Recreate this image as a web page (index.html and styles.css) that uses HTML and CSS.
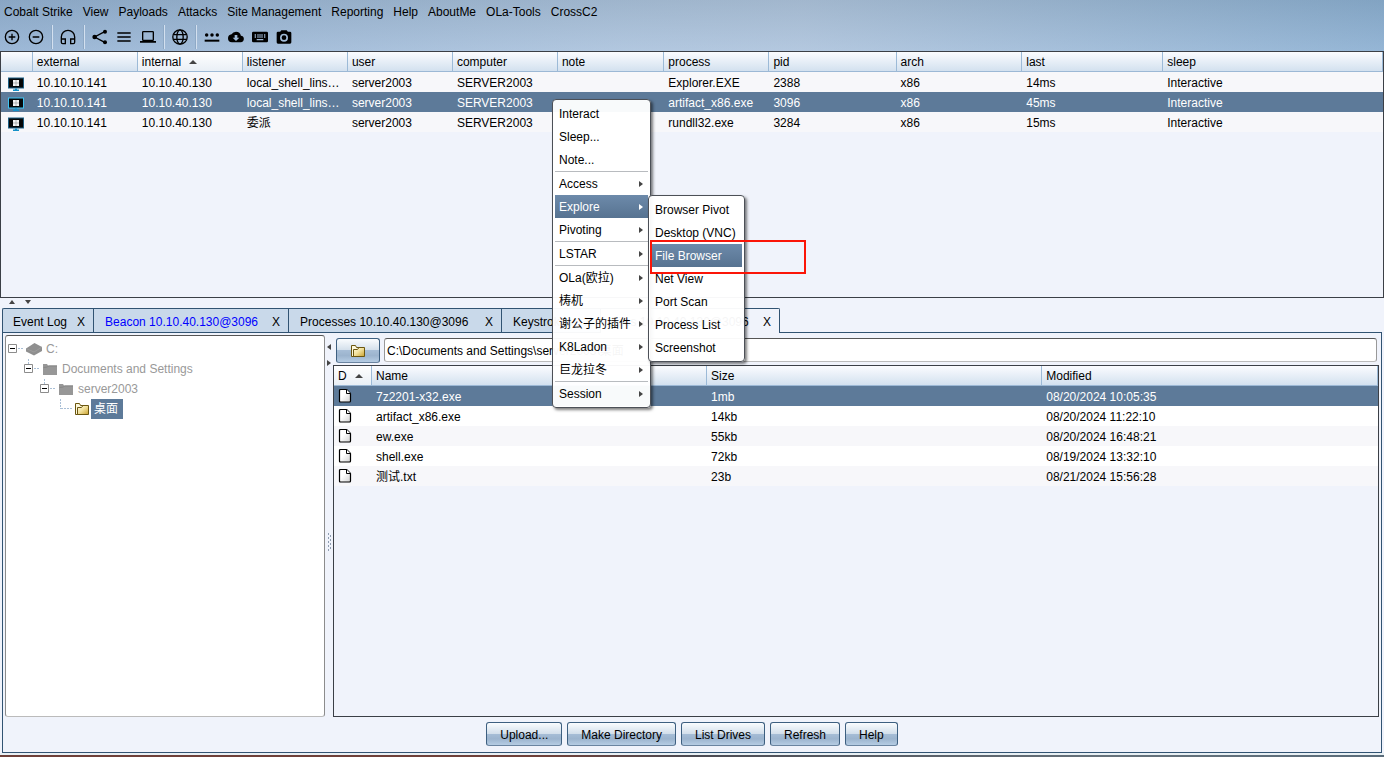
FILE: index.html
```html
<!DOCTYPE html>
<html lang="en">
<head>
<meta charset="utf-8">
<title>Cobalt Strike</title>
<link rel="stylesheet" href="styles.css">
</head>
<body>
<svg class="defs" aria-hidden="true">
  <defs>
    <linearGradient id="gold" x1="0" y1="0" x2="1" y2="1"><stop offset="0" stop-color="#fffbe0"/><stop offset=".45" stop-color="#f3e3a0"/><stop offset="1" stop-color="#c9a02c"/></linearGradient>
    <linearGradient id="paper" x1="0" y1="0" x2="1" y2="1"><stop offset=".4" stop-color="#fff"/><stop offset="1" stop-color="#d0d0d0"/></linearGradient>
    <symbol id="folder" viewBox="0 0 16 16"><path d="M1.500 2.500h4l1 2h7v9h-12z" fill="#fdf8dc" stroke="#6b560e"/><path d="M3.500 13.500V6.500h4l1.500-2h5.500v9z" fill="url(#gold)" stroke="#6b5610"/></symbol>
    <symbol id="folder-grey" viewBox="0 0 16 16"><path d="M1 3h4l1 1.500h9V14H1z" fill="#979797"/><path d="M1.500 6.500l4-.5 1-1H15" fill="none" stroke="#858585"/></symbol>
    <symbol id="drive" viewBox="0 0 16 16"><path d="M0 7.500 8.500 2 16 6v4L8 14.500 0 10.500z" fill="#8f8f8f"/><path d="M0 7.500 8 11l8-5" fill="none" stroke="#a2a2a2" stroke-width=".7"/></symbol>
    <symbol id="file" viewBox="0 0 14 16"><path d="M2.500 1.500h6l4 4v7.500q0 1-1 1h-9q-1 0-1-1v-10.500q0-1 1-1z" fill="url(#paper)" stroke="#000" stroke-width="1.200" stroke-linejoin="round"/><path d="M8.500 1.500v4h4" fill="#fff" stroke="#000"/></symbol>
    <symbol id="host" viewBox="0 0 18 14"><path d="M1 .5h16v11H1z" fill="currentColor"/><path d="M2 1.500h14v9H2z" fill="#050708"/><path d="M8 11.500h2v1h2v1.500H6v-1.500h2z" fill="#1490c8"/><path d="M6 3h6v6H6z" fill="#f4f4f4"/><path d="M9 3v6M6 6h6" stroke="#8a8a8a" stroke-width=".6"/></symbol>
  </defs>
</svg>
<div class="app">
  <header class="top">
    <nav class="menubar">
      <button>Cobalt Strike</button><button>View</button><button>Payloads</button><button>Attacks</button><button>Site Management</button><button>Reporting</button><button>Help</button><button>AboutMe</button><button>OLa-Tools</button><button>CrossC2</button>
    </nav>
    <div class="toolbar">
      <button aria-label="Connect"><svg viewBox="0 0 24 24"><path d="M13 7h-2v4H7v2h4v4h2v-4h4v-2h-4zM12 1a11 11 0 1 0 0 22 11 11 0 0 0 0-22zm0 20a9 9 0 1 1 0-18 9 9 0 0 1 0 18z"/></svg></button>
      <button aria-label="Disconnect"><svg viewBox="0 0 24 24"><path d="M7 11v2h10v-2zM12 1a11 11 0 1 0 0 22 11 11 0 0 0 0-22zm0 20a9 9 0 1 1 0-18 9 9 0 0 1 0 18z"/></svg></button>
      <span class="sep"></span>
      <button aria-label="Listeners"><svg viewBox="0 0 24 24"><path d="M12 1A11 11 0 0 0 1 12v8a3 3 0 0 0 3 3h5v-9H3v-2a9 9 0 0 1 18 0v2h-6v9h5a3 3 0 0 0 3-3v-8A11 11 0 0 0 12 1zM7 16v5H4a1 1 0 0 1-1-1v-4zm14 4a1 1 0 0 1-1 1h-3v-5h4z"/></svg></button>
      <span class="sep"></span>
      <button aria-label="Pivot graph"><svg viewBox="0 0 24 24"><path d="M19 4 4 12l15 8" fill="none" stroke="#000" stroke-width="2"/><circle cx="19.500" cy="4" r="3"/><circle cx="4" cy="12" r="3.500"/><circle cx="19.500" cy="20" r="3"/></svg></button>
      <button aria-label="Session table"><svg viewBox="0 0 24 24"><path d="M2 5h20v2H2zm0 6h20v2H2zm0 6h20v2H2z"/></svg></button>
      <button aria-label="Targets"><svg viewBox="0 0 24 24"><path fill-rule="evenodd" d="M5 3h14q2 0 2 2v11q0 2-2 2h5v2.500H0V18h5q-2 0-2-2V5q0-2 2-2zm0 2v11h14V5z"/></svg></button>
      <span class="sep"></span>
      <button aria-label="Web drive-by"><svg viewBox="0 0 24 24"><g fill="none" stroke="#000" stroke-width="2"><circle cx="12" cy="12" r="10.800"/><ellipse cx="12" cy="12" rx="4.800" ry="10.800"/><path d="M2.500 8.500h19M2.500 15.500h19"/></g></svg></button>
      <span class="sep"></span>
      <button aria-label="Credentials"><svg viewBox="0 0 24 24"><path d="M1 16h22v3H1z"/><circle cx="4" cy="9" r="2.600"/><circle cx="12" cy="9" r="2.600"/><circle cx="20" cy="9" r="2.600"/></svg></button>
      <button aria-label="Downloads"><svg viewBox="0 0 24 24"><path d="M19.350 10.040A7.490 7.490 0 0 0 12 4a7.480 7.480 0 0 0-6.650 4.040A6 6 0 0 0 0 14a6 6 0 0 0 6 6h13a5 5 0 0 0 .350-9.960zM17 13l-5 5-5-5h3V9h4v4z"/></svg></button>
      <button aria-label="Keystrokes"><svg viewBox="0 0 24 24"><path fill-rule="evenodd" d="M2 4h20q2 0 2 2v12q0 2-2 2H2q-2 0-2-2V6q0-2 2-2zm9 4v2h2V8zm0 3v2h2v-2zM8 8v2h2V8zm0 3v2h2v-2zM4 8v2h2V8zm0 3v2h2v-2zm3 4v2h10v-2zm7-7v2h2V8zm0 3v2h2v-2zm4-3v2h2V8zm0 3v2h2v-2z"/></svg></button>
      <button aria-label="Screenshots"><svg viewBox="0 0 24 24"><path fill-rule="evenodd" d="M8 2 6.200 4H3Q1 4 1 6v14q0 2 2 2h18q2 0 2-2V6q0-2-2-2h-3.200L16 2zm4 5a6 6 0 1 1 0 12 6 6 0 0 1 0-12z"/><circle cx="12" cy="13" r="3.500"/></svg></button>
    </div>
  </header>

  <section class="sessions">
    <table class="grid">
      <colgroup><col class="c-os"><col class="c-s"><col class="c-s"><col class="c-s"><col class="c-s"><col class="c-s"><col class="c-note"><col class="c-s"><col class="c-pid"><col class="c-arch"><col class="c-last"><col></colgroup>
      <thead><tr><th></th><th>external</th><th class="sorted">internal<i class="up"></i></th><th>listener</th><th>user</th><th>computer</th><th>note</th><th>process</th><th>pid</th><th>arch</th><th>last</th><th>sleep</th></tr></thead>
      <tbody>
        <tr class="odd"><td class="os"><svg><use href="#host"/></svg></td><td>10.10.10.141</td><td>10.10.40.130</td><td>local_shell_linshell</td><td>server2003</td><td>SERVER2003</td><td></td><td>Explorer.EXE</td><td>2388</td><td>x86</td><td>14ms</td><td>Interactive</td></tr>
        <tr class="sel"><td class="os"><svg><use href="#host"/></svg></td><td>10.10.10.141</td><td>10.10.40.130</td><td>local_shell_linshell</td><td>server2003</td><td>SERVER2003</td><td></td><td>artifact_x86.exe</td><td>3096</td><td>x86</td><td>45ms</td><td>Interactive</td></tr>
        <tr class="odd"><td class="os"><svg><use href="#host"/></svg></td><td>10.10.10.141</td><td>10.10.40.130</td><td>委派</td><td>server2003</td><td>SERVER2003</td><td></td><td>rundll32.exe</td><td>3284</td><td>x86</td><td>15ms</td><td>Interactive</td></tr>
      </tbody>
    </table>
  </section>

  <div class="hsplit"><i class="up"></i><i class="down"></i></div>

  <div class="tabs" role="tablist">
    <button role="tab">Event Log<span>X</span></button><button role="tab" class="fresh">Beacon 10.10.40.130@3096<span>X</span></button><button role="tab" class="wide">Processes 10.10.40.130@3096<span>X</span></button><button role="tab">Keystrokes<span>X</span></button><button role="tab" class="active" aria-selected="true">Files 10.10.40.130@3096<span>X</span></button>
  </div>

  <main class="panel">
    <div class="work">
      <div class="tree">
        <div class="node"><button aria-label="Collapse C:"><svg viewBox="0 0 20 20"><path d="M2.500 5.500h8v8h-8z" fill="#fff" stroke="#8c8c8c"/><path d="M4 9.500h5" stroke="#000"/><path d="M12 9.500h6" stroke="#a9bfd6" stroke-dasharray="2 1"/></svg></button><svg class="ic"><use href="#drive"/></svg><span>C:</span></div>
        <div class="node l1"><button aria-label="Collapse Documents and Settings"><svg viewBox="0 0 20 20"><path d="M6.500 0v5M12 9.500h6" stroke="#a9bfd6" stroke-dasharray="2 1"/><path d="M2.500 5.500h8v8h-8z" fill="#fff" stroke="#8c8c8c"/><path d="M4 9.500h5" stroke="#000"/></svg></button><svg class="ic"><use href="#folder-grey"/></svg><span>Documents and Settings</span></div>
        <div class="node l2"><button aria-label="Collapse server2003"><svg viewBox="0 0 20 20"><path d="M6.500 0v5M12 9.500h6" stroke="#a9bfd6" stroke-dasharray="2 1"/><path d="M2.500 5.500h8v8h-8z" fill="#fff" stroke="#8c8c8c"/><path d="M4 9.500h5" stroke="#000"/></svg></button><svg class="ic"><use href="#folder-grey"/></svg><span>server2003</span></div>
        <div class="node l3 current"><svg class="lead" viewBox="0 0 20 20"><path d="M6.500 0v10M7 9.500h11" fill="none" stroke="#a9bfd6" stroke-dasharray="2 1"/></svg><svg class="ic"><use href="#folder"/></svg><span>桌面</span></div>
      </div>
      <div class="vsplit"><i class="left"></i><i class="right"></i><svg class="grip" viewBox="0 0 6 20"><path d="M1.500 1v19" stroke="#8e9db1" stroke-dasharray="2 2"/><path d="M3.500 3v16" stroke="#8e9db1" stroke-dasharray="2 2"/></svg></div>
      <div class="browser">
        <div class="path"><button class="btn parent" aria-label="Parent folder"><svg><use href="#folder"/></svg></button><input type="text" aria-label="Path" value="C:\Documents and Settings\server2003\桌面"></div>
        <div class="files">
          <table class="grid">
            <colgroup><col class="c-d"><col class="c-name"><col class="c-name"><col></colgroup>
            <thead><tr><th class="sorted">D<i class="up"></i></th><th>Name</th><th>Size</th><th>Modified</th></tr></thead>
            <tbody>
              <tr class="sel"><td class="ft"><svg><use href="#file"/></svg></td><td>7z2201-x32.exe</td><td>1mb</td><td>08/20/2024 10:05:35</td></tr>
              <tr class="even"><td class="ft"><svg><use href="#file"/></svg></td><td>artifact_x86.exe</td><td>14kb</td><td>08/20/2024 11:22:10</td></tr>
              <tr class="odd"><td class="ft"><svg><use href="#file"/></svg></td><td>ew.exe</td><td>55kb</td><td>08/20/2024 16:48:21</td></tr>
              <tr class="even"><td class="ft"><svg><use href="#file"/></svg></td><td>shell.exe</td><td>72kb</td><td>08/19/2024 13:32:10</td></tr>
              <tr class="odd"><td class="ft"><svg><use href="#file"/></svg></td><td>测试.txt</td><td>23b</td><td>08/21/2024 15:56:28</td></tr>
            </tbody>
          </table>
        </div>
      </div>
    </div>
    <div class="actions"><button class="btn">Upload...</button><button class="btn">Make Directory</button><button class="btn">List Drives</button><button class="btn">Refresh</button><button class="btn">Help</button></div>
  </main>
  <div class="desktop"></div>
</div>

<div class="popup context" role="menu">
  <button role="menuitem">Interact</button><button role="menuitem">Sleep...</button><button role="menuitem">Note...</button>
  <hr>
  <button role="menuitem">Access<i class="right"></i></button><button role="menuitem" class="hot">Explore<i class="right"></i></button><button role="menuitem">Pivoting<i class="right"></i></button>
  <hr>
  <button role="menuitem">LSTAR<i class="right"></i></button>
  <hr>
  <button role="menuitem">OLa(欧拉)<i class="right"></i></button><button role="menuitem">梼杌<i class="right"></i></button><button role="menuitem">谢公子的插件<i class="right"></i></button><button role="menuitem">K8Ladon<i class="right"></i></button><button role="menuitem">巨龙拉冬<i class="right"></i></button>
  <hr>
  <button role="menuitem">Session<i class="right"></i></button>
</div>
<div class="popup explore" role="menu">
  <button role="menuitem">Browser Pivot</button><button role="menuitem">Desktop (VNC)</button><button role="menuitem" class="hot">File Browser</button><button role="menuitem">Net View</button><button role="menuitem">Port Scan</button><button role="menuitem">Process List</button><button role="menuitem">Screenshot</button>
</div>
<div class="highlight"></div>
</body>
</html>
```

FILE: styles.css
```css
* { box-sizing: border-box; }
body, button, input, table { font: 12px/20px "Liberation Sans", Arial, "Noto Sans CJK SC", sans-serif; color: #000; }
body { margin: 0; background: #f0f3fb; }
button { border: 0; margin: 0; padding: 0; background: none; white-space: nowrap; }
svg { display: block; }
.defs { position: absolute; width: 0; height: 0; }
.app { display: flex; flex-direction: column; height: 100vh; overflow: hidden; }

.top { background: linear-gradient(90deg, rgba(120,150,185,.25), rgba(205,210,220,.25) 45%, rgba(205,210,220,.3) 58%, rgba(90,140,180,.25)), linear-gradient(#8fabc7, #a9c4e1); }
.menubar { display: flex; gap: 10px; padding: 2px 4px; height: 24px; }
.toolbar { display: flex; align-items: center; gap: 8px; height: 27px; padding: 0 4px 1px; }
.toolbar svg { width: 16px; height: 16px; fill: #000; }
.sep { width: 2px; height: 24px; margin: 0 -1px; background: linear-gradient(90deg, #8ea9c6 50%, #d3e0ef 50%); }

i { display: inline-block; width: 0; height: 0; border: 3px solid transparent; }
i.up { border-bottom: 4px solid #444; border-top: 0; }
i.down { border-top: 4px solid #444; border-bottom: 0; }
i.left { border-right: 4px solid #444; border-left: 0; }
i.right { border-left: 4px solid #444; border-right: 0; }

.sessions { height: 247px; border: 1px solid #3b3f46; background: #f0f3fb; }
.grid { width: 100%; table-layout: fixed; border-collapse: separate; border-spacing: 0; }
.grid th { height: 20px; padding: 1px 4px 0; line-height: 18px; font-weight: 400; text-align: left; white-space: nowrap; border-right: 1px solid #9cbad7; border-bottom: 1px solid #9cb8d5; background: linear-gradient(#fbfcff, #d3e1ef); }
.grid th.sorted { background: linear-gradient(#fff, #e9eff5); }
.grid th i { margin: 0 0 2px 8px; border-width: 0 4px 4px; }
.grid td { height: 20px; padding: 2px 4px 0; line-height: 18px; overflow: hidden; text-overflow: ellipsis; white-space: nowrap; }
.odd { background: #f7f7fa; }
.even { background: #fff; }
.sel td { background: #5d7a99; color: #fff; }
.grid td.os { padding: 3px 0 0 6px; color: #1d5f84; }
.grid .sel td.os { color: #3fc4f3; }
.os svg { width: 18px; height: 14px; }
.grid td.ft { padding: 0 0 0 4px; }
.ft svg { width: 14px; height: 16px; }
.c-os { width: 2.3%; }
.c-s { width: 7.6%; }
.c-note { width: 7.7%; }
.c-pid { width: 9.2%; }
.c-arch { width: 9.1%; }
.c-last { width: 10.2%; }
.c-d { width: 38px; }
.c-name { width: 32.1%; }

.hsplit { height: 10px; padding: 2px 9px; display: flex; align-items: flex-start; gap: 10px; }
.tabs { display: flex; padding-left: 2px; height: 24px; }
.tabs button { display: flex; align-items: center; justify-content: space-between; gap: 10px; padding: 2px 8px 0 10px; border: 1px solid #315372; border-width: 1px 0 0 1px; background: #c9d9ea; }
.tabs button:first-child { border-top-left-radius: 2px; }
.tabs .fresh { min-width: 195px; padding-left: 11px; color: #00f; }
.tabs .wide { min-width: 213px; padding-left: 11px; }
.tabs .wide + button { min-width: 99px; padding-left: 11px; }
.tabs .active { position: relative; min-width: 180px; height: 25px; margin-bottom: -1px; border-right-width: 1px; background: #f0f3fb; border-top-right-radius: 2px; }
.tabs span { color: #000; }

.panel { flex: 1; min-height: 0; display: flex; flex-direction: column; margin: 0 2px; border: 1px solid #315372; }
.work { flex: 1; min-height: 0; display: flex; padding: 2px; }
.tree { width: 320px; padding: 3px 0; background: #fff; border: 1px solid #8c8c8c; border-top-color: #555; border-bottom-color: #bbb; border-radius: 3px; }
.node { display: flex; align-items: center; height: 20px; color: #999; }
.node button svg, .lead { width: 20px; height: 20px; }
.ic { width: 16px; height: 16px; }
.node span { padding: 0 2px 0 4px; }
.l1 { padding-left: 16px; }
.l2 { padding-left: 32px; }
.l3 { padding-left: 48px; }
.node.current span { margin-left: 1px; padding: 0 5px 0 3px; background: #5d7a99; color: #fff; }
.vsplit { width: 8px; display: flex; flex-direction: column; align-items: flex-start; gap: 10px; padding: 9px 2px; }
.grip { width: 6px; height: 20px; margin: auto 0; }
.browser { flex: 1; min-width: 0; display: flex; flex-direction: column; }
.path { display: flex; gap: 4px; height: 30px; padding: 3px 2px 2px 3px; }
.btn { height: 24px; padding: 0 13px; border: 1px solid #3d5f80; border-bottom-color: #6a84a0; border-radius: 3px; background: linear-gradient(#fafcfe, #d3dfeb 48%, #a6bdd6 50%, #9cb4ce 72%, #b5cce3); }
.parent { height: 25px; width: 44px; }
.parent svg { width: 16px; height: 16px; margin: auto; }
.path input { flex: 1; min-width: 0; height: 24px; padding: 0 2px 2px; background: #fff; border: 1px solid #999; border-top-color: #555; border-bottom-color: #bbb; border-radius: 3px; outline: 0; }
.files { flex: 1; border: 1px solid #3b3f46; background: #f0f3fb; }
.actions { display: flex; justify-content: center; gap: 5px; padding: 3px 0 6px; }
.actions .btn { padding: 2px 13px 0; }
.desktop { height: 4px; border-top: 2px solid #e8f0f4; background: linear-gradient(90deg, #6e4039 40%, #4b4a52 50%, #66727b 80%, #5a6c7a); }

.popup { position: absolute; padding: 2px; border: 1px solid #4c5057; border-radius: 4px; background: rgba(255,255,255,.96); box-shadow: 2px 2px 3px rgba(0,0,0,.5); }
.popup button { display: flex; align-items: center; justify-content: space-between; width: 100%; height: 23px; padding: 0 5px 0 4px; }
.popup hr { margin: 0; border: 0; height: 1px; background: #b8bbbf; }
.popup .hot { color: #fff; background: linear-gradient(#6d8aaa, #577391); }
.popup .hot i { border-left-color: #fff; }
.context { left: 552px; top: 99px; width: 99px; }
.explore { left: 648px; top: 195px; width: 97px; }
.highlight { position: absolute; left: 650px; top: 240px; width: 156px; height: 34px; border: 2px solid #fb1508; }
```
